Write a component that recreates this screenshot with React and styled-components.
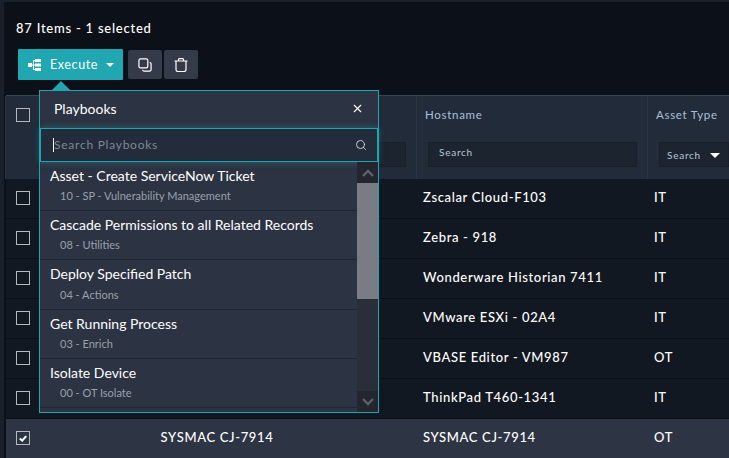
import React from 'react';
import styled, { createGlobalStyle } from 'styled-components';
import { Search, X } from 'lucide-react';

const rows = [
  { host: 'Zscalar Cloud-F103', type: 'IT' },
  { host: 'Zebra - 918', type: 'IT' },
  { host: 'Wonderware Historian 7411', type: 'IT' },
  { host: 'VMware ESXi - 02A4', type: 'IT' },
  { host: 'VBASE Editor - VM987', type: 'OT' },
  { host: 'ThinkPad T460-1341', type: 'IT' },
  { name: 'SYSMAC CJ-7914', host: 'SYSMAC CJ-7914', type: 'OT', selected: true },
];

const playbooks = [
  { title: 'Asset - Create ServiceNow Ticket', sub: '10 - SP - Vulnerability Management' },
  { title: 'Cascade Permissions to all Related Records', sub: '08 - Utilities' },
  { title: 'Deploy Specified Patch', sub: '04 - Actions' },
  { title: 'Get Running Process', sub: '03 - Enrich' },
  { title: 'Isolate Device', sub: '00 - OT Isolate' },
];

const App = () => {
  return (
    <Page>
      <GlobalStyle />
      <Count>87 Items - 1 selected</Count>
      <Toolbar>
        <ExecuteBtn>
          <svg width="14" height="12" viewBox="0 0 14 12" fill="#fff">
            <rect x="0" y="4" width="4" height="4" />
            <rect x="7" y="0" width="6" height="3" />
            <rect x="7" y="4.5" width="6" height="3" />
            <rect x="7" y="9" width="6" height="3" />
            <path d="M4 6h3M5.5 1.5v9h1.5M5.5 1.5h1.5" stroke="#fff" strokeWidth="1" fill="none" />
          </svg>
          <span>Execute</span>
          <Caret />
        </ExecuteBtn>
        <IconBtn>
          <svg width="14" height="14" viewBox="0 0 15 15" fill="none" stroke="#fff" strokeWidth="1.3">
            <rect x="1" y="1" width="9.5" height="9.5" rx="1.5" />
            <path d="M12.5 5h.2A1.5 1.5 0 0 1 14 6.5v6A1.5 1.5 0 0 1 12.5 14h-6A1.5 1.5 0 0 1 5 12.5" />
          </svg>
        </IconBtn>
        <IconBtn>
          <svg width="14" height="14" viewBox="0 0 14 14" fill="none" stroke="#fff" strokeWidth="1.2">
            <path d="M.5 3h13M4.5 3V1.500A1 1 0 0 1 5.500.6h3a1 1 0 0 1 1 .9V3M2 3v8.500A2 2 0 0 0 4 13.500h6a2 2 0 0 0 2-2V3" />
          </svg>
        </IconBtn>
      </Toolbar>
      <Table>
        <HeadRow>
          <HeadCell>
            <CheckBox />
          </HeadCell>
          <HeadCell>
            <FilterInput />
          </HeadCell>
          <HeadCell>
            <HeadLabel>Hostname</HeadLabel>
            <FilterInput>Search</FilterInput>
          </HeadCell>
          <HeadCell>
            <HeadLabel>Asset Type</HeadLabel>
            <FilterSelect>
              Search
              <SelectCaret />
            </FilterSelect>
          </HeadCell>
        </HeadRow>
        {rows.map((row) => (
          <Row key={row.host} $selected={row.selected}>
            <CheckCell>
              <CheckBox>
                {row.selected && (
                  <svg width="8" height="7" viewBox="0 0 10 8" fill="none" stroke="#fff" strokeWidth="2.6">
                    <path d="M1 4l3 2.6L9 1" />
                  </svg>
                )}
              </CheckBox>
            </CheckCell>
            <NameCell>{row.name}</NameCell>
            <Cell>{row.host}</Cell>
            <Cell>{row.type}</Cell>
          </Row>
        ))}
      </Table>
      <Popover>
        <PopoverArrow />
        <PopoverHead>
          <span>Playbooks</span>
          <X size={13} color="#fff" strokeWidth={2} />
        </PopoverHead>
        <SearchBox>
          <Cursor />
          <SearchText>Search Playbooks</SearchText>
          <Search size={12} color="#d5dbe3" strokeWidth={1.8} />
        </SearchBox>
        <ListWrap>
          <List>
            {playbooks.map((item) => (
              <Item key={item.title}>
                <ItemTitle>{item.title}</ItemTitle>
                <ItemSub>{item.sub}</ItemSub>
              </Item>
            ))}
          </List>
          <ScrollBar>
            <ScrollBtn>
              <svg width="14" height="8" viewBox="0 0 14 8" fill="none" stroke="#5d6068" strokeWidth="2.4">
                <path d="M2 7l5-5 5 5" />
              </svg>
            </ScrollBtn>
            <ScrollTrack>
              <ScrollThumb />
            </ScrollTrack>
            <ScrollBtn>
              <svg width="14" height="8" viewBox="0 0 14 8" fill="none" stroke="#5d6068" strokeWidth="2.4">
                <path d="M2 1l5 5 5-5" />
              </svg>
            </ScrollBtn>
          </ScrollBar>
        </ListWrap>
      </Popover>
    </Page>
  );
};

export default App;

const GlobalStyle = createGlobalStyle`
  html, body {
    margin: 0;
    padding: 0;
    background: #1a202b;
  }
  body {
    font-family: 'Lato', 'Liberation Sans', sans-serif;
    color: #fff;
    overflow: hidden;
  }
  * {
    box-sizing: border-box;
  }
`;

const Page = styled.div`
  position: relative;
  width: 729px;
  height: 456px;
  margin-top: 2px;
  padding-left: 5px;
  background: #1a202b;
  overflow: hidden;
  &::before {
    content: '';
    position: absolute;
    inset: 0 0 0 4px;
    background: #0c1119;
  }
  & > * {
    position: relative;
  }
`;

const Count = styled.div`
  padding: 18px 0 0 11px;
  height: 47px;
  font-size: 13px;
  line-height: 16px;
  font-weight: 500;
  letter-spacing: 0.76px;
`;

const Toolbar = styled.div`
  display: flex;
  align-items: center;
  height: 31px;
  padding-left: 13px;
`;

const ExecuteBtn = styled.button`
  display: flex;
  align-items: center;
  width: 105px;
  height: 31px;
  margin-right: 5px;
  padding: 0 0 0 10px;
  border: none;
  border-radius: 1px;
  background: #20a7b2;
  color: #fff;
  font-family: inherit;
  font-size: 12.5px;
  letter-spacing: 0.6px;
  span {
    margin: 0 8px 0 8px;
  }
`;

const Caret = styled.i`
  display: inline-block;
  width: 0;
  height: 0;
  margin-top: 1px;
  border-left: 4px solid transparent;
  border-right: 4px solid transparent;
  border-top: 4px solid #fff;
`;

const SelectCaret = styled(Caret)`
  border-left-width: 5px;
  border-right-width: 5px;
  border-top-width: 5px;
`;

const IconBtn = styled.button`
  display: flex;
  align-items: center;
  justify-content: center;
  width: 34px;
  height: 29px;
  margin-right: 2px;
  border: none;
  border-radius: 2px;
  background: #343a48;
`;

const Table = styled.div`
  margin: 15px 0 0 1px;
  border-top: 1px solid #3a4456;
`;

const HeadRow = styled.div`
  display: grid;
  grid-template-columns: 35px 376px 231px 1fr;
  height: 83px;
  background: #212b39;
`;

const HeadCell = styled.div`
  position: relative;
  padding: 11px 0 0 8px;
  border-left: 1px solid #2a3443;
  margin-left: -1px;
`;

const HeadLabel = styled.div`
  height: 34px;
  font-size: 11.5px;
  line-height: 16px;
  color: #a9c0dc;
  letter-spacing: 0.7px;
`;

const FilterInput = styled.div`
  position: absolute;
  top: 46px;
  left: 11px;
  right: 11px;
  height: 25px;
  padding: 2px 0 0 10px;
  background: #1c2430;
  border: 1px solid #19202b;
  font-size: 10px;
  line-height: 14px;
  letter-spacing: 0.75px;
  color: #b9c6d6;
`;

const FilterSelect = styled.div`
  position: absolute;
  top: 46px;
  left: 11px;
  right: 0;
  height: 25px;
  padding: 0 0 0 7px;
  display: flex;
  align-items: center;
  gap: 9px;
  background: #1c2430;
  border: 1px solid #19202b;
  font-size: 10px;
  letter-spacing: 0.75px;
  color: #b9c6d6;
`;

const Row = styled.div`
  display: grid;
  grid-template-columns: 35px 376px 231px 1fr;
  align-items: center;
  height: 40px;
  background: ${(props) => (props.$selected ? '#2d3443' : '#121821')};
  border-bottom: 1px solid ${(props) => (props.$selected ? '#2d3443' : '#0a0e15')};
  font-size: 13px;
  font-weight: 500;
  letter-spacing: 0.65px;
`;

const Cell = styled.div`
  padding: 0 0 3px 6px;
`;

const CheckCell = styled.div`
  padding: 0 0 1px 10px;
`;

const NameCell = styled.div`
  padding: 0 24px 3px 0;
  text-align: center;
`;

const CheckBox = styled.div`
  display: flex;
  align-items: center;
  justify-content: center;
  width: 14px;
  height: 14px;
  border: 1px solid #b5b8bd;
  ${HeadCell} > & {
    margin: 1px 0 0 2px;
  }
`;

const Popover = styled.div`
  position: absolute !important;
  top: 88px;
  left: 39px;
  width: 340px;
  height: 323px;
  border: 1px solid #1fa5b0;
  background: #2c3342;
`;

const PopoverArrow = styled.div`
  position: absolute;
  top: -10px;
  left: 12px;
  width: 0;
  height: 0;
  border-left: 9px solid transparent;
  border-right: 9px solid transparent;
  border-bottom: 9px solid #20a7b2;
`;

const PopoverHead = styled.div`
  display: flex;
  align-items: center;
  justify-content: space-between;
  height: 37px;
  padding: 0 14px 3px 14px;
  font-size: 14px;
`;

const SearchBox = styled.div`
  display: flex;
  align-items: center;
  height: 34px;
  padding: 0 10px 0 12px;
  background: #222c3a;
  border: 1px solid #1fa5b0;
  box-shadow: 0 0 6px rgba(31, 165, 176, 0.5);
`;

const Cursor = styled.i`
  width: 1px;
  height: 14px;
  background: #fff;
`;

const SearchText = styled.span`
  flex: 1;
  padding-bottom: 2px;
  font-size: 12px;
  letter-spacing: 0.75px;
  color: #7f8894;
`;

const ListWrap = styled.div`
  display: flex;
  height: 250px;
`;

const List = styled.div`
  flex: 1;
  overflow: hidden;
`;

const Item = styled.div`
  height: 49.2px;
  padding: 5px 0 0 10px;
  border-bottom: 1px solid #1f2531;
`;

const ItemTitle = styled.div`
  font-size: 14px;
  line-height: 18px;
`;

const ItemSub = styled.div`
  margin-top: 4.2px;
  padding-left: 10px;
  font-size: 11px;
  line-height: 14px;
  color: #9aa1ac;
`;

const ScrollBar = styled.div`
  display: flex;
  flex-direction: column;
  width: 21px;
  background: #2a2e38;
`;

const ScrollBtn = styled.div`
  display: flex;
  align-items: center;
  justify-content: center;
  height: 21px;
  background: #23262e;
`;

const ScrollTrack = styled.div`
  flex: 1;
`;

const ScrollThumb = styled.div`
  height: 116px;
  background: #7a7c85;
`;
